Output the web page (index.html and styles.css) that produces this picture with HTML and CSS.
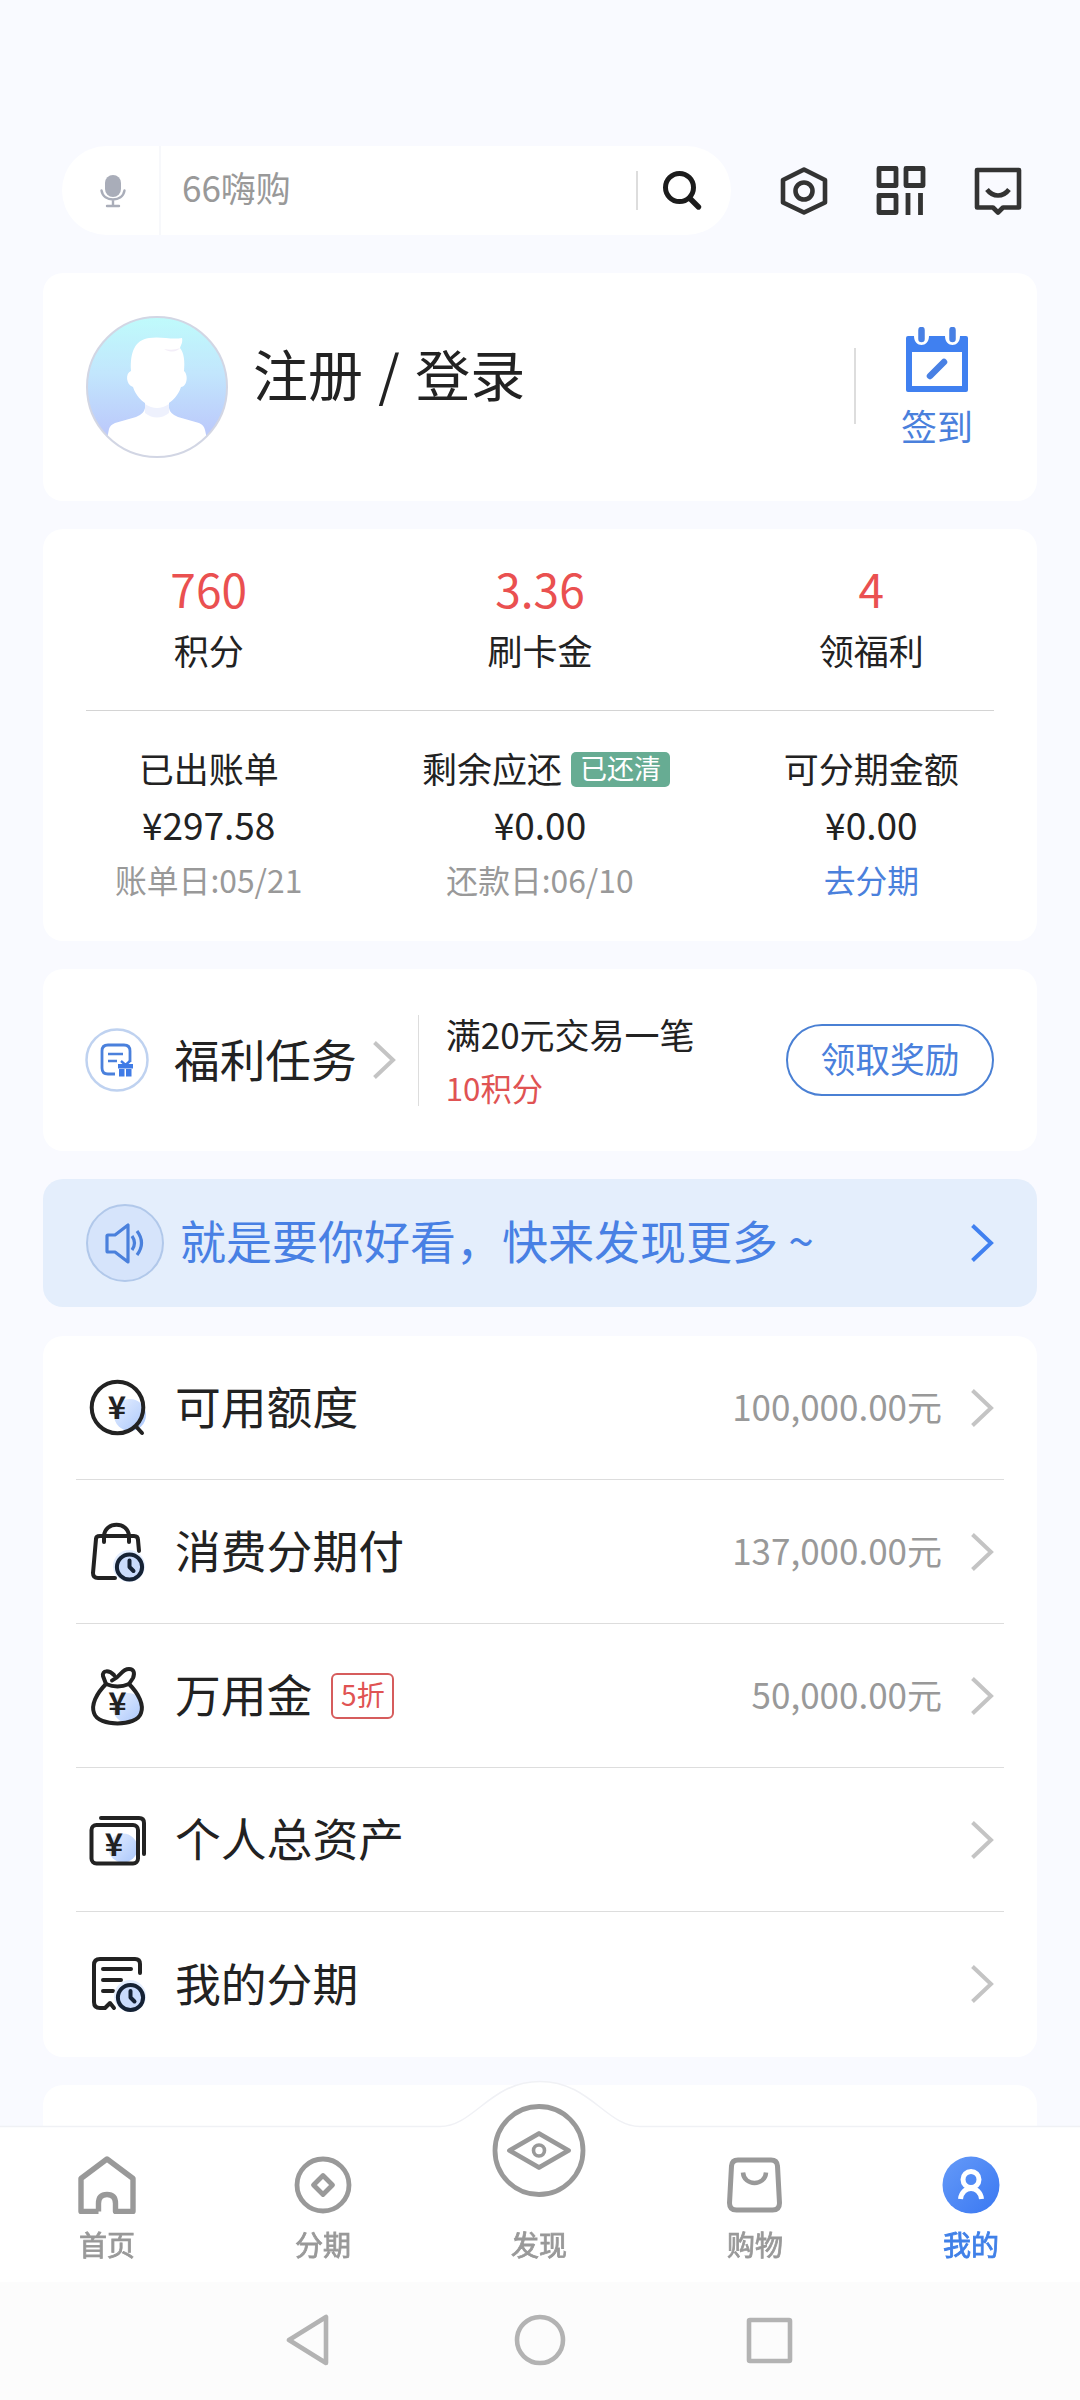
FILE: index.html
```html
<!DOCTYPE html>
<html lang="zh-CN">
<head>
    <meta charset="UTF-8">
    <meta name="viewport" content="width=device-width, initial-scale=1.0">
    <title>我的</title>
    <link rel="stylesheet" href="styles.css">
</head>
<body>
    <svg class="defs" width="0" height="0">
        <defs>
            <linearGradient id="dot" x1="0" y1="0" x2="1" y2="1">
                <stop offset="0" stop-color="#e6efff"/>
                <stop offset="1" stop-color="#a9c6fb"/>
            </linearGradient>
            <linearGradient id="sky" x1="0" y1="0" x2="0" y2="1">
                <stop offset="0" stop-color="#bffbfb"/>
                <stop offset="0.4" stop-color="#c2e6fd"/>
                <stop offset="0.8" stop-color="#bccbfb"/>
            </linearGradient>
            <linearGradient id="me" x1="0" y1="0" x2="1" y2="1">
                <stop offset="0" stop-color="#659af8"/>
                <stop offset="1" stop-color="#3a78f2"/>
            </linearGradient>
            <symbol id="arrow" viewBox="0 0 24 40">
                <path d="M2.500 2.500L21 20 2.500 37.500" fill="none" stroke="currentColor" stroke-width="4"/>
            </symbol>
        </defs>
    </svg>

    <div class="page">
        <div class="top">
            <div class="search">
                <div class="mic">
                    <svg width="26" height="34" viewBox="0 0 26 34">
                        <rect x="5" y="1" width="16" height="22" rx="8" fill="#a9adb9"/>
                        <path d="M1.500 16.500c1 6 6 9 11.500 9s10.500-3 11.500-9M13 26v6M7 32h12" fill="none" stroke="#a9adb9" stroke-width="2.400" stroke-linecap="round"/>
                    </svg>
                </div>
                <span class="search-text">66嗨购</span>
                <div class="search-btn">
                    <svg width="40" height="40" viewBox="0 0 40 40" fill="none" stroke="#1c1c1c">
                        <circle cx="16.500" cy="16.500" r="14" stroke-width="5"/>
                        <path d="M27.500 28l8 8" stroke-width="5.400" stroke-linecap="round"/>
                    </svg>
                </div>
            </div>
            <svg class="top-icon" width="50" height="50" viewBox="0 0 50 50" fill="none" stroke="#333" stroke-width="4.600" stroke-linejoin="round">
                <path d="M25 3.500l21 10.500v22.500L25 46.500 4 36.500V14z"/>
                <circle cx="25" cy="25" r="8.500"/>
            </svg>
            <svg class="top-icon" width="50" height="50" viewBox="0 0 50 50" fill="none" stroke="#333" stroke-width="4.800" stroke-linejoin="round">
                <path d="M3 2.500h17v17H3zM30 2.500h17v17H30zM3 29.500h17v17H3zM32 27v22M44.500 27v22"/>
            </svg>
            <svg class="top-icon" width="50" height="50" viewBox="0 0 50 50" fill="none" stroke="#333" stroke-width="4.600" stroke-linejoin="round">
                <path d="M4 4h42v37.500H30L25 46.500l-5-5H4z"/>
                <path d="M14 23.500c6 8 16 8 22 0"/>
            </svg>
        </div>

        <div class="card login">
            <svg class="avatar" width="142" height="142" viewBox="0 0 142 142">
                <clipPath id="face"><circle cx="71" cy="71" r="70"/></clipPath>
                <circle cx="71" cy="71" r="70" fill="url(#sky)"/>
                <g clip-path="url(#face)">
                    <path d="M59 84v8q-1 6-9 9l-21 6q-5 2-6 6l-2 10v25h100v-25l-2-9q-1-5-6-7l-21-6q-8-3-9-9v-8z" fill="#fff"/>
                    <path d="M59 88q12 8 24 0v9q-12 9-24 0z" fill="#eef1fd"/>
                    <path d="M45 55c-1-19 4-31 18-33 12-2 22 2 33 0 1 4-1 7-2 10 4 5 5 13 4 23 4 3 4 15-3 16-3 10-13 20-24 20S50 81 47 71c-7-2-8-14-2-16z" fill="#fff"/>
                    <path d="M78 33c6 1 11 1 16-1-3 4-9 5-16 1z" fill="#f3eef8"/>
                </g>
                <circle cx="71" cy="71" r="70" fill="none" stroke="#d2d6e4" stroke-width="2"/>
            </svg>
            <div class="login-name">注册 / 登录</div>
            <div class="sign">
                <svg width="64" height="66" viewBox="0 0 64 66">
                    <path d="M1 11q0-2 2-2h6c0 12 15 12 15 0h16c0 12 15 12 15 0h6q2 0 2 2v52q0 2-2 2H3q-2 0-2-2z" fill="#4080f0"/>
                    <path d="M7 25h50v34H7z" fill="#fff"/>
                    <path d="M16.500 3v9M47.500 3v9M25 49l14-14" stroke="#4880e4" stroke-width="6.500" stroke-linecap="round"/>
                </svg>
                <span>签到</span>
            </div>
        </div>

        <div class="card account">
            <div class="cols stats">
                <div><b>760</b><span>积分</span></div>
                <div><b>3.36</b><span>刷卡金</span></div>
                <div><b>4</b><span>领福利</span></div>
            </div>
            <div class="cols bills">
                <div>
                    <div class="bill-title">已出账单</div>
                    <div class="bill-value">¥297.58</div>
                    <div class="bill-note">账单日:05/21</div>
                </div>
                <div>
                    <div class="bill-title has-badge">剩余应还<span class="badge">已还清</span></div>
                    <div class="bill-value">¥0.00</div>
                    <div class="bill-note">还款日:06/10</div>
                </div>
                <div>
                    <div class="bill-title">可分期金额</div>
                    <div class="bill-value">¥0.00</div>
                    <div class="bill-note link">去分期</div>
                </div>
            </div>
        </div>

        <div class="card task">
            <svg width="64" height="64" viewBox="0 0 64 64" fill="none">
                <circle cx="32" cy="32" r="30.500" stroke="#bfd2f0" stroke-width="2.500"/>
                <path d="M30 46h-7q-6 0-6-6V23q0-6 6-6h16q6 0 6 6v11" stroke="#4a80dc" stroke-width="2.800"/>
                <path d="M23 26h15M23 33h9" stroke="#4a80dc" stroke-width="2.600"/>
                <path d="M33 36h15v4.500H33zM34 41h5.500v7.500H34zM41 41h5.500v7.500H41z" fill="#3f7be6"/>
                <path d="M36 33l4.500 4 4.500-4" stroke="#3f7be6" stroke-width="2.400"/>
            </svg>
            <div class="task-name">福利任务</div>
            <svg class="arrow" width="24" height="40"><use href="#arrow"/></svg>
            <div class="task-info">
                <div class="task-title">满20元交易一笔</div>
                <div class="task-points">10积分</div>
            </div>
            <button class="task-btn">领取奖励</button>
        </div>

        <div class="card banner">
            <svg width="78" height="78" viewBox="0 0 78 78" fill="none" stroke="#4a80dc" stroke-width="3.200">
                <circle cx="39" cy="39" r="38" fill="#d6e4fb" stroke="#b1c8ea" stroke-width="2"/>
                <path d="M42 21v37L29 48h-7q-1 0-1-1V32q0-1 1-1h7z" stroke-linejoin="round"/>
                <path d="M46 32q5 7 0 14M51 27q9 12 0 24"/>
            </svg>
            <div class="banner-text">就是要你好看，快来发现更多 ~</div>
            <svg class="arrow blue" width="24" height="40"><use href="#arrow"/></svg>
        </div>

        <div class="card list">
            <div class="row">
                <svg class="row-icon" width="60" height="60" viewBox="0 0 60 60">
                    <circle cx="42" cy="37" r="16" fill="url(#dot)"/>
                    <circle cx="29.500" cy="29.500" r="25.800" class="ink"/>
                    <path d="M48.500 49l5.500 6" class="ink"/>
                    <text x="29" y="41" class="yen">¥</text>
                </svg>
                <span class="row-name">可用额度</span>
                <span class="row-value">100,000.00元</span>
                <svg class="arrow" width="24" height="40"><use href="#arrow"/></svg>
            </div>
            <div class="row">
                <svg class="row-icon" width="60" height="60" viewBox="0 0 60 60">
                    <path d="M27 56H10q-5 0-5-5l3-34q0-3 4-3h34q4 0 4 4l1 11" class="ink"/>
                    <path d="M16 20v-6c1-15 24-15 25 0v6" class="ink"/>
                    <circle cx="41" cy="44" r="16" fill="#e3edfe"/>
                    <circle cx="41.500" cy="45" r="12.600" class="ink clock"/>
                    <path d="M41.500 38.500v6.500l4 4" class="ink clock"/>
                </svg>
                <span class="row-name">消费分期付</span>
                <span class="row-value">137,000.00元</span>
                <svg class="arrow" width="24" height="40"><use href="#arrow"/></svg>
            </div>
            <div class="row">
                <svg class="row-icon" width="60" height="60" viewBox="0 0 60 60">
                    <circle cx="40" cy="42" r="15" fill="url(#dot)"/>
                    <path d="M18 18C8 28 3 39 6 47c4 14 43 14 47 0 3-8-2-19-12-29-7 3-16 3-23 0z" class="ink"/>
                    <path d="M18 18l-3-8c-1-6 6-6 11-1M24 14.500C34 10 33 3 41 3c5 0 6 4 4 9l-4 6" class="ink"/>
                    <text x="29.500" y="49" class="yen">¥</text>
                </svg>
                <span class="row-name">万用金</span>
                <span class="tag">5折</span>
                <span class="row-value">50,000.00元</span>
                <svg class="arrow" width="24" height="40"><use href="#arrow"/></svg>
            </div>
            <div class="row">
                <svg class="row-icon" width="60" height="60" viewBox="0 0 60 60">
                    <circle cx="35" cy="38" r="14.500" fill="url(#dot)"/>
                    <rect x="3.500" y="15" width="46.500" height="38.500" rx="5" class="ink"/>
                    <path d="M13 8h38q5 0 5 5v31" class="ink"/>
                    <text x="26" y="46" class="yen">¥</text>
                </svg>
                <span class="row-name">个人总资产</span>
                <svg class="arrow last" width="24" height="40"><use href="#arrow"/></svg>
            </div>
            <div class="row">
                <svg class="row-icon" width="60" height="60" viewBox="0 0 60 60">
                    <path d="M52 19V10q0-5-5-5H12q-6 0-6 6v37q0 6 6 6h5l5-5 4 5" class="ink"/>
                    <path d="M15 15h28M15 26h18M15 37h10" class="ink"/>
                    <circle cx="42" cy="42" r="16" fill="#e3edfe"/>
                    <circle cx="42.500" cy="43.500" r="12.600" class="ink clock"/>
                    <path d="M42.500 37v6.500l4 4" class="ink clock"/>
                </svg>
                <span class="row-name">我的分期</span>
                <svg class="arrow last" width="24" height="40"><use href="#arrow"/></svg>
            </div>
        </div>

        <div class="card more"></div>
    </div>

    <div class="bottom">
        <!-- raised edge behind the middle tab -->
        <svg class="hump" width="1080" height="48" viewBox="0 0 1080 48">
            <path d="M0 46.500H440C474 46.500 490 1.500 540 1.500S606 46.500 640 46.500H1080V48H0z" fill="#fff"/>
            <path d="M0 46.500H440C474 46.500 490 1.500 540 1.500S606 46.500 640 46.500H1080" fill="none" stroke="#f0f1f5" stroke-width="1.500"/>
        </svg>
        <div class="tabs">
            <div class="tab">
                <svg width="58" height="58" viewBox="0 0 58 58" fill="none" stroke="#999" stroke-width="5.400" stroke-linejoin="round">
                    <path d="M20.500 55.500v-8q0-9 8.500-9t8.500 9v8H55V22.500L29 3 3 22.500v33h17.500"/>
                </svg>
                <span>首页</span>
            </div>
            <div class="tab">
                <svg width="58" height="58" viewBox="0 0 58 58" fill="none" stroke="#999" stroke-width="4.800" stroke-linejoin="round">
                    <circle cx="29" cy="29" r="26"/>
                    <path d="M29 19.500l9.500 9.500-9.500 9.500-9.500-9.500z"/>
                </svg>
                <span>分期</span>
            </div>
            <div class="tab middle">
                <svg width="96" height="96" viewBox="0 0 96 96" fill="none" stroke="#999" stroke-width="4.800" stroke-linejoin="round">
                    <circle cx="48" cy="48.500" r="44"/>
                    <path d="M18.500 48.500L48 31.500l29.500 17L48 65.500z"/>
                    <circle cx="48" cy="48.500" r="5.500" stroke-width="3.600"/>
                </svg>
                <span>发现</span>
            </div>
            <div class="tab">
                <svg width="58" height="58" viewBox="0 0 58 58" fill="none" stroke="#999" stroke-width="5">
                    <path d="M12 4h33q6 0 6.500 6l2 37q0 7-7 7h-36q-7 0-7-7l2-37q.5-6 6.500-6z"/>
                    <path d="M17 16.500c1 14 22 14 23 0" stroke-width="4.500"/>
                </svg>
                <span>购物</span>
            </div>
            <div class="tab active">
                <svg width="58" height="58" viewBox="0 0 58 58" fill="none" stroke="#fff" stroke-width="5">
                    <circle cx="29" cy="29" r="28.500" fill="url(#me)" stroke="none"/>
                    <circle cx="29" cy="23.500" r="8"/>
                    <path d="M18.500 43c1.500-14 19.500-14 21 0"/>
                </svg>
                <span>我的</span>
            </div>
        </div>
        <div class="sysbar">
            <svg width="50" height="52" viewBox="0 0 50 52"><path d="M42 3v46L5 26z"/></svg>
            <svg width="52" height="52" viewBox="0 0 52 52"><circle cx="26" cy="26" r="23"/></svg>
            <svg width="50" height="52" viewBox="0 0 50 52"><rect x="4" y="6" width="41" height="41" rx="1"/></svg>
        </div>
    </div>
</body>
</html>
```
FILE: styles.css
```css
* {
    box-sizing: border-box;
}
body {
    margin: 0;
    height: 2400px;
    overflow: hidden;
    background: #f9faff;
    color: #222;
    font-family: "Noto Sans CJK SC", sans-serif;
}
svg {
    display: block;
    flex-shrink: 0;
}
.defs {
    position: absolute;
}
.page {
    height: 2400px;
    padding: 146px 43px 0;
    overflow: hidden;
}

/* search */
.top {
    display: flex;
    align-items: center;
    margin: 0 10px 38px 19px;
}
.search {
    display: flex;
    align-items: center;
    width: 669px;
    height: 89px;
    margin-right: 48px;
    border-radius: 45px;
    background: #fff;
}
.mic {
    display: flex;
    align-items: center;
    height: 89px;
    width: 99px;
    padding-left: 38px;
    border-right: 2px solid #f7f8fb;
}
.search-text {
    flex: 1;
    margin: -9px 0 0 21px;
    font-size: 35px;
    color: #999;
}
.search-btn {
    width: 95px;
    height: 39px;
    padding-left: 25px;
    border-left: 2px solid #ddd;
}
.top-icon {
    margin-right: 47px;
}
.top-icon:last-child {
    margin-right: 0;
}

.card {
    margin-bottom: 28px;
    border-radius: 20px;
    background: #fff;
}

/* login */
.login {
    display: flex;
    align-items: flex-start;
    height: 228px;
    padding: 43px 17px 0 43px;
}
.login-name {
    flex: 1;
    margin: 26px 0 0 25px;
    font-size: 55px;
    line-height: 60px;
    word-spacing: 3px;
}
.sign {
    display: flex;
    flex-direction: column;
    align-items: center;
    position: relative;
    width: 166px;
    padding-top: 11px;
    color: #4a80dc;
    font-size: 36px;
    line-height: 40px;
}
.sign::before {
    content: "";
    position: absolute;
    left: 0;
    top: 32px;
    width: 2px;
    height: 76px;
    background: #ddd;
}
.sign span {
    margin-top: 12px;
}

/* account */
.account {
    height: 412px;
    padding-top: 31px;
}
.cols {
    display: grid;
    grid-template-columns: repeat(3, 1fr);
    text-align: center;
}
.stats {
    height: 152px;
}
.stats b {
    display: block;
    font-size: 46px;
    line-height: 56px;
    font-weight: 400;
    color: #ea5050;
}
.stats span {
    display: block;
    margin-top: 12px;
    font-size: 35px;
    line-height: 44px;
}
.bills {
    position: relative;
    padding-top: 34px;
}
.bills::before {
    content: "";
    position: absolute;
    left: 43px;
    right: 43px;
    top: -2px;
    height: 1px;
    background: #d4d4d4;
}
.bill-title {
    font-size: 35px;
    line-height: 44px;
}
.has-badge {
    display: flex;
    align-items: center;
    justify-content: center;
    padding-left: 12px;
}
.badge {
    width: 99px;
    height: 35px;
    margin: 2px 0 0 9px;
    border-radius: 5px;
    background: #67ac93;
    color: #fff;
    font-size: 27px;
    line-height: 31px;
}
.bill-value {
    margin-top: 12px;
    font-size: 37px;
    line-height: 44px;
}
.bill-note {
    margin-top: 13px;
    font-size: 31.8px;
    line-height: 40px;
    color: #999;
}
.link {
    color: #4a80dc;
}

/* task */
.arrow {
    color: #c4c4c4;
}
.blue {
    color: #4080f0;
}
.task {
    display: flex;
    align-items: center;
    height: 182px;
    padding: 0 43px 0 42px;
}
.task-name {
    margin: -5px 15px 0 25px;
    font-size: 45.7px;
}
.task-info {
    flex: 1;
    margin-left: 22px;
    padding-left: 27px;
    border-left: 1px solid #ddd;
}
.task-title {
    margin-top: -3px;
    font-size: 35px;
    line-height: 44px;
}
.task-points {
    margin-top: 14px;
    font-size: 31.3px;
    line-height: 36px;
    color: #e05353;
}
.task-btn {
    width: 208px;
    height: 72px;
    padding: 0 0 4px;
    border: 2px solid #4a80d4;
    border-radius: 36px;
    background: #fff;
    color: #4a80dc;
    font-family: inherit;
    font-size: 34.8px;
    line-height: 60px;
}

/* banner */
.banner {
    display: flex;
    align-items: center;
    height: 128px;
    padding: 0 43px;
    background: #e4eefc;
}
.banner-text {
    flex: 1;
    margin: -9px 0 0 16px;
    font-size: 46px;
    color: #4880e4;
}

/* list */
.list {
    height: 721px;
    margin-top: 29px;
    padding: 0 33px;
}
.row {
    display: flex;
    align-items: center;
    height: 144px;
    padding: 0 10px 0 12px;
    border-bottom: 1px solid #ddd;
}
.row:last-child {
    border-bottom: 0;
}
.row-name {
    margin: -5px 0 0 27px;
    font-size: 45.8px;
}
.ink {
    fill: none;
    stroke: #222;
    stroke-width: 4;
    stroke-linecap: round;
    stroke-linejoin: round;
}
.ink.clock {
    stroke: #152235;
}
circle.clock {
    fill: #c9dbfc;
}
.yen {
    font-size: 31px;
    font-weight: 700;
    text-anchor: middle;
    fill: #222;
}
.tag {
    width: 63px;
    height: 46px;
    margin-left: 19px;
    border: 2px solid #d65c5c;
    border-radius: 6px;
    font-size: 28px;
    line-height: 38px;
    text-align: center;
    color: #e05353;
}
.row-value {
    margin: -4px 28px 0 auto;
    font-size: 35px;
    color: #999;
}
.last {
    margin-left: auto;
}
.more {
    height: 200px;
}

/* bottom bars */
.bottom {
    position: fixed;
    left: 0;
    right: 0;
    bottom: 0;
}
.hump {
    position: absolute;
    left: 0;
    top: -46px;
}
.tabs {
    position: relative;
    display: flex;
    justify-content: space-between;
    height: 156px;
    padding: 0 59px 0 57px;
    background: linear-gradient(#fff, #fff) 0 2px no-repeat;
}
.tab {
    display: flex;
    flex-direction: column;
    align-items: center;
    width: 100px;
    padding-top: 30px;
    font-size: 28px;
    line-height: 36px;
    color: #999;
    -webkit-text-stroke: 0.8px currentColor;
}
.tab span {
    margin-top: 12px;
}
.middle {
    padding-top: 0;
}
.middle svg {
    margin-top: -24px;
}
.middle span {
    margin-top: 28px;
}
.active {
    color: #4080e8;
}
.sysbar {
    display: flex;
    justify-content: space-between;
    height: 118px;
    padding: 32px 285px 0 284px;
    background: #fcfcfc;
}
.sysbar svg {
    fill: none;
    stroke: #b3b3b3;
    stroke-width: 4.6;
    stroke-linejoin: round;
}
```
